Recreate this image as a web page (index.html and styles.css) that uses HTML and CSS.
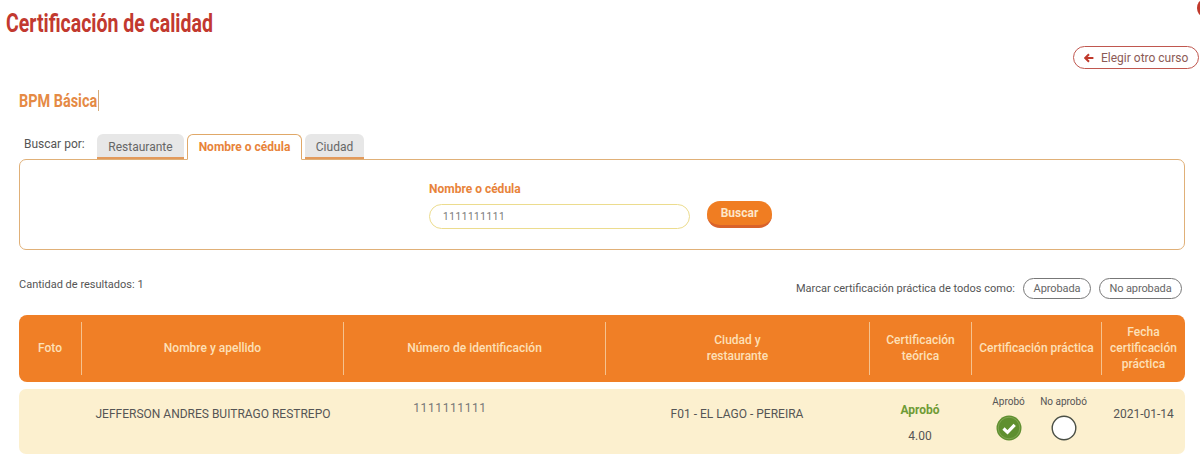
FILE: index.html
```html
<!DOCTYPE html>
<html lang="es">
<head>
<meta charset="utf-8">
<title>Certificación de calidad</title>
<link rel="stylesheet" href="styles.css">
</head>
<body>
<span class="corner-dot"></span>
<main class="page">
  <h1 class="title">Certificación de calidad</h1>
  <div class="back-row">
    <a class="back-btn" href="#">
      <svg class="back-icon" viewBox="0 0 10 10" width="10" height="10" aria-hidden="true"><path d="M5 1.2 1.2 5 5 8.8M1.6 5H9.4" fill="none" stroke="#c0392b" stroke-width="2"/></svg>
      Elegir otro curso
    </a>
  </div>
  <h2 class="course"><span class="course-text">BPM Básica</span></h2>
  <div class="tabs-row">
    <span class="tabs-label">Buscar por:</span>
    <span class="tab tab-a">Restaurante</span>
    <span class="tab tab-b tab-active">Nombre o cédula</span>
    <span class="tab tab-c">Ciudad</span>
  </div>
  <section class="panel">
    <div class="field">
      <label class="field-label">Nombre o cédula</label>
      <div class="input">1111111111</div>
    </div>
    <button class="search-btn">Buscar</button>
  </section>
  <div class="result-bar">
    <span class="count">Cantidad de resultados: 1</span>
    <div class="mark-all">
      <span class="mark-text">Marcar certificación práctica de todos como:</span>
      <span class="pill pill-a">Aprobada</span>
      <span class="pill pill-b">No aprobada</span>
    </div>
  </div>
  <div class="grid head">
    <div class="hc">Foto</div>
    <div class="hc">Nombre y apellido</div>
    <div class="hc">Número de identificación</div>
    <div class="hc">Ciudad y<br>restaurante</div>
    <div class="hc">Certificación<br>teórica</div>
    <div class="hc">Certificación práctica</div>
    <div class="hc">Fecha<br>certificación<br>práctica</div>
  </div>
  <div class="grid row">
    <div class="c"></div>
    <div class="c c-name c-person">JEFFERSON ANDRES BUITRAGO RESTREPO</div>
    <div class="c c-id">1111111111</div>
    <div class="c c-name">F01 - EL LAGO - PEREIRA</div>
    <div class="c c-theory"><strong class="passed">Aprobó</strong><span class="score">4.00</span></div>
    <div class="c c-practice">
      <div class="opt">
        <span class="opt-label">Aprobó</span>
        <svg class="radio" viewBox="0 0 26 26" width="26" height="26" aria-hidden="true"><circle cx="13" cy="13" r="12.5" fill="#5f8f2f"/><circle cx="13" cy="13" r="10.8" fill="none" stroke="#86ab58" stroke-width=".8"/><path d="M7.5 13.5 11.5 17.3 18.7 9.8" fill="none" stroke="#fff" stroke-width="3.2"/></svg>
      </div>
      <div class="opt">
        <span class="opt-label">No aprobó</span>
        <svg class="radio" viewBox="0 0 26 26" width="26" height="26" aria-hidden="true"><circle cx="13" cy="13" r="11.8" fill="#fff" stroke="#4a4f45" stroke-width="1.4"/></svg>
      </div>
    </div>
    <div class="c c-name c-date">2021-01-14</div>
  </div>
</main>
</body>
</html>
```
FILE: styles.css
```css
* { box-sizing: border-box; }
html, body { margin: 0; height: 467px; overflow: hidden; background: #fff; }
body { font-family: Roboto, "Liberation Sans", sans-serif; color: #555; position: relative; }
.corner-dot { position: absolute; top: 0; right: -9px; width: 12px; height: 16px; border-radius: 50%; background: #c0392b; }
.page { display: flex; flex-direction: column; padding: 0 15px 0 19px; }
.title { align-self: flex-start; margin: 8px 0 0 -13px; font: 700 26px/30px Roboto, sans-serif; color: #c2392f; transform: scaleX(.75); transform-origin: left center; white-space: nowrap; }
.back-row { display: flex; justify-content: flex-end; margin: 8px -14px 0 0; }
.back-btn { display: flex; align-items: center; gap: 7px; height: 23px; width: 126px; padding-left: 10px; border: 1px solid #c0574f; border-radius: 12px; font-size: 12px; color: #8c5a55; text-decoration: none; white-space: nowrap; }
.course { align-self: flex-start; margin: 21px 0 0; height: 21px; font: 700 19px/21px Roboto, sans-serif; color: #e58a45; transform: scaleX(.76); transform-origin: left center; white-space: nowrap; }
.course-text { display: inline-block; border-right: 1px solid #c9914f; padding-right: 1px; }
.tabs-row { display: flex; align-items: flex-end; margin-top: 22px; height: 26px; padding-left: 5px; }
.tabs-label { width: 73px; align-self: flex-start; margin-top: 4px; font-size: 12px; color: #555; }
.tab { display: flex; align-items: center; justify-content: center; height: 25px; padding-top: 3px; margin-right: 3px; background: #e7e7e7; border-bottom: 2px solid #e29a5c; border-radius: 6px 6px 0 0; font-size: 12px; color: #666; }
.tab-a { width: 87px; }
.tab-b { width: 115px; }
.tab-c { width: 59px; }
.tab-active { position: relative; padding-top: 0; background: #fff; border: 1px solid #e0a868; border-bottom: 1px solid #fff; margin-bottom: -1px; height: 26px; font-weight: 700; color: #e8833a; }
.panel { display: flex; align-items: flex-start; height: 91px; padding: 21px 0 0 409px; border: 1px solid #e0b078; border-radius: 7px; }
.field { width: 261px; margin-right: 17px; }
.field-label { display: block; height: 18px; font: 700 12px/16px Roboto, sans-serif; color: #e8833a; }
.input { height: 25px; margin-top: 5px; padding-left: 13px; border: 1px solid #ecdc8e; border-radius: 13px; font-size: 10px; line-height: 23px; letter-spacing: .6px; color: #777; }
.search-btn { width: 65px; height: 27px; margin-top: 20px; border: 0; border-bottom: 3px solid #d9622a; border-radius: 13px; background: #f07d22; color: #fde6c8; font: 700 12px Roboto, sans-serif; }
.result-bar { display: flex; justify-content: space-between; align-items: flex-start; margin-top: 28px; height: 37px; }
.count { font-size: 11px; line-height: 14px; color: #555; }
.mark-all { display: flex; align-items: center; margin-right: 3px; font-size: 11px; }
.mark-text { width: 227px; white-space: nowrap; }
.pill { display: flex; align-items: center; justify-content: center; height: 21px; border: 1px solid #777; border-radius: 11px; font-size: 11px; letter-spacing: -.1px; color: #666; }
.pill-a { width: 68px; margin-right: 8px; }
.pill-b { width: 83px; }
.grid { display: grid; grid-template-columns: 62px 262px 262px 264px 102px 130px 84px; }
.head { height: 67px; padding: 7px 0; background: #f07f26; border-radius: 8px; color: #fde0b8; }
.hc { display: flex; align-items: center; justify-content: center; padding-bottom: 2px; text-align: center; font-size: 12px; font-weight: 500; line-height: 16px; border-left: 1px solid #f5c28e; }
.hc:first-child { border-left: 0; }
.row { height: 65px; margin-top: 7px; background: #fcf0cf; border-radius: 7px; }
.c { display: flex; align-items: flex-start; justify-content: center; text-align: center; font-size: 12px; color: #555; }
.c-name { padding-top: 18px; line-height: 14px; }
.c-person { padding-left: 2px; }
.c-date { padding-left: 1px; }
.c-id { padding: 12px 48px 0 0; line-height: 14px; letter-spacing: .6px; color: #777; }
.c-theory { flex-direction: column; align-items: center; padding-top: 12px; line-height: 14px; }
.c-theory { padding-top: 12px; }
.passed { color: #6f9b35; margin-top: -9px; }
.score { margin-top: 12px; }
.c-practice { gap: 15px; padding-top: 7px; }
.opt { display: flex; flex-direction: column; align-items: center; font-size: 10px; line-height: 12px; width: 40px; white-space: nowrap; }
.radio { margin-top: 7px; }
```
